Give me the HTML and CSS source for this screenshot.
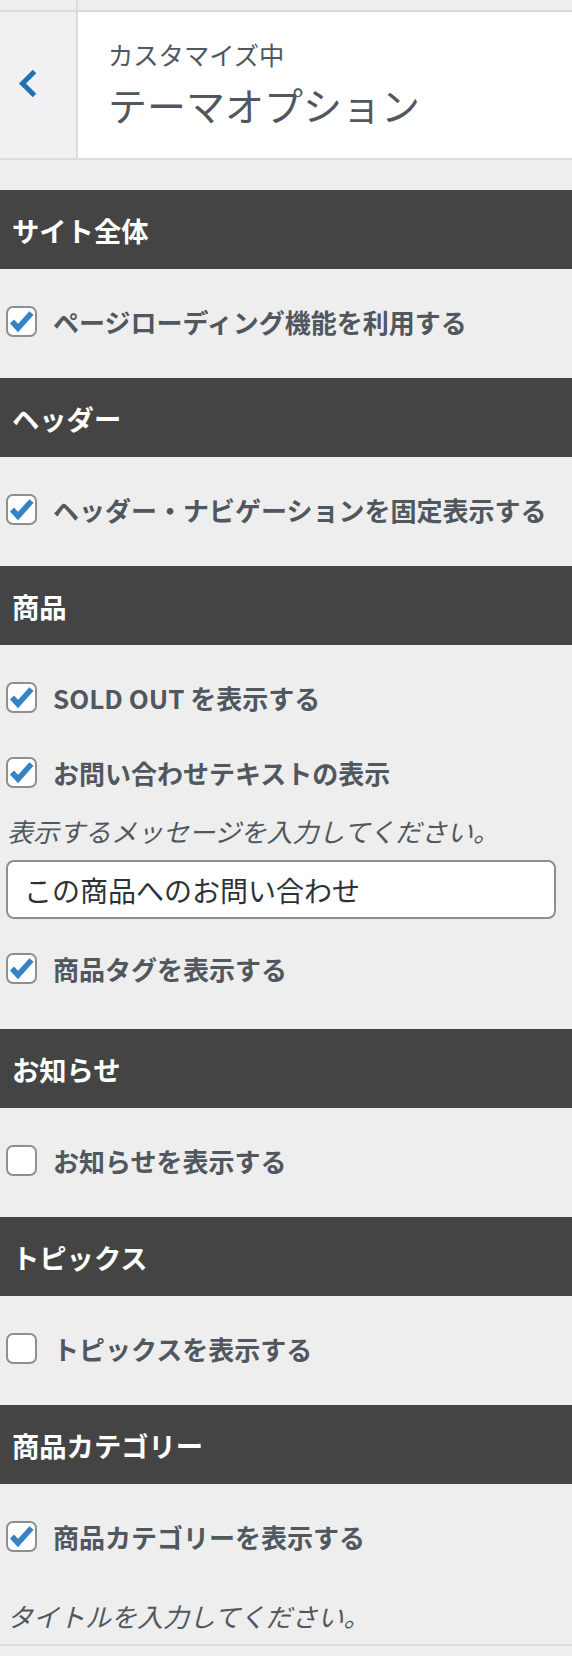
FILE: index.html
```html
<!DOCTYPE html>
<html lang="ja">
<head>
  <meta charset="UTF-8">
  <title>テーマオプション</title>
  <link rel="stylesheet" href="styles.css">
</head>
<body>
  <div class="topbar">
    <div class="topbar-back"></div>
  </div>

  <header class="panel-head">
    <button class="back" type="button" aria-label="戻る">
      <svg width="40" height="40" viewBox="0 0 40 40">
        <polyline points="34.5,7.5 22.5,19.5 34.5,31.5" fill="none" stroke="#2271b1" stroke-width="5"/>
      </svg>
    </button>
    <div class="titles">
      <span class="action">カスタマイズ中</span>
      <h1 class="title">テーマオプション</h1>
    </div>
  </header>

  <section class="group">
    <h2 class="group-title">サイト全体</h2>
    <div class="group-body">
      <label class="option"><span class="box checked"></span>ページローディング機能を利用する</label>
    </div>
  </section>

  <section class="group">
    <h2 class="group-title">ヘッダー</h2>
    <div class="group-body">
      <label class="option"><span class="box checked"></span>ヘッダー・ナビゲーションを固定表示する</label>
    </div>
  </section>

  <section class="group">
    <h2 class="group-title">商品</h2>
    <div class="group-body products">
      <label class="option"><span class="box checked"></span>SOLD OUT を表示する</label>
      <label class="option next"><span class="box checked"></span>お問い合わせテキストの表示</label>
      <p class="desc">表示するメッセージを入力してください。</p>
      <input class="text" type="text" value="この商品へのお問い合わせ">
      <label class="option after-input"><span class="box checked"></span>商品タグを表示する</label>
    </div>
  </section>

  <section class="group">
    <h2 class="group-title">お知らせ</h2>
    <div class="group-body">
      <label class="option"><span class="box"></span>お知らせを表示する</label>
    </div>
  </section>

  <section class="group">
    <h2 class="group-title">トピックス</h2>
    <div class="group-body">
      <label class="option"><span class="box"></span>トピックスを表示する</label>
    </div>
  </section>

  <section class="group">
    <h2 class="group-title">商品カテゴリー</h2>
    <div class="group-body last">
      <label class="option"><span class="box checked"></span>商品カテゴリーを表示する</label>
      <p class="desc far">タイトルを入力してください。</p>
      <div class="divider"></div>
    </div>
  </section>
</body>
</html>
```

FILE: styles.css
```css
body {
  margin: 0;
  background: #eeeeee;
  font-family: "Noto Sans CJK JP", "Noto Sans", sans-serif;
  color: #50575e;
}
.topbar {
  height: 10px;
  border-bottom: 2px solid #dcdcde;
  display: flex;
}
.topbar-back {
  width: 76px;
  border-right: 2px solid #dcdcde;
}
.panel-head {
  display: flex;
  height: 146px;
  background: #fff;
  border-bottom: 2px solid #dcdcde;
}
.back {
  width: 78px;
  padding: 0;
  margin: 0;
  border: 0;
  border-right: 2px solid #dcdcde;
  background: #f1f1f3;
  display: flex;
  align-items: center;
  justify-content: flex-start;
}
.back svg {
  display: block;
  margin-top: -3px;
}
.titles {
  display: flex;
  flex-direction: column;
  padding: 30px 0 0 30px;
}
.action {
  font-size: 25.3px;
  line-height: 25px;
}
.title {
  margin: 18px 0 0;
  font-size: 39px;
  line-height: 39px;
  font-weight: 400;
}
.group:first-of-type {
  margin-top: 30px;
}
.group-title {
  margin: 0;
  height: 79px;
  display: flex;
  align-items: center;
  padding-left: 12px;
  background: #444444;
  color: #fff;
  font-size: 27.3px;
  font-weight: 700;
}
.group-body {
  display: flex;
  flex-direction: column;
  padding: 37px 16px 41px 6px;
}
.group-body.products {
  padding-bottom: 45px;
}
.group-body.last {
  padding-bottom: 0;
}
.option {
  display: flex;
  align-items: center;
  height: 31px;
  font-size: 26px;
  font-weight: 700;
  white-space: nowrap;
}
.option.next {
  margin-top: 44px;
}
.option.after-input {
  margin-top: 34px;
}
.box {
  width: 31px;
  height: 31px;
  box-sizing: border-box;
  flex: none;
  border: 2px solid #8c8f94;
  border-radius: 7px;
  background: #fff;
  margin-right: 16px;
}
.box.checked {
  background: #fff url("data:image/svg+xml,%3Csvg xmlns='http://www.w3.org/2000/svg' viewBox='0 0 27 27'%3E%3Cpolyline points='4,13.5 10,20 23.5,5' fill='none' stroke='%233582c4' stroke-width='5.6'/%3E%3C/svg%3E") center / 27px 27px no-repeat;
}
.desc {
  margin: 26px 0 0 1px;
  font-size: 26px;
  line-height: 34px;
  font-style: italic;
}
.desc.far {
  margin-top: 47px;
}
.text {
  margin-top: 12px;
  height: 59px;
  box-sizing: border-box;
  border: 2px solid #8c8f94;
  border-radius: 8px;
  background: #fff;
  padding: 0 16px;
  font-family: inherit;
  font-size: 28px;
  color: #2c3338;
  outline: none;
}
.divider {
  margin: 11px -16px 0 -6px;
  height: 10px;
  border-top: 2px solid #dcdcde;
}
```
